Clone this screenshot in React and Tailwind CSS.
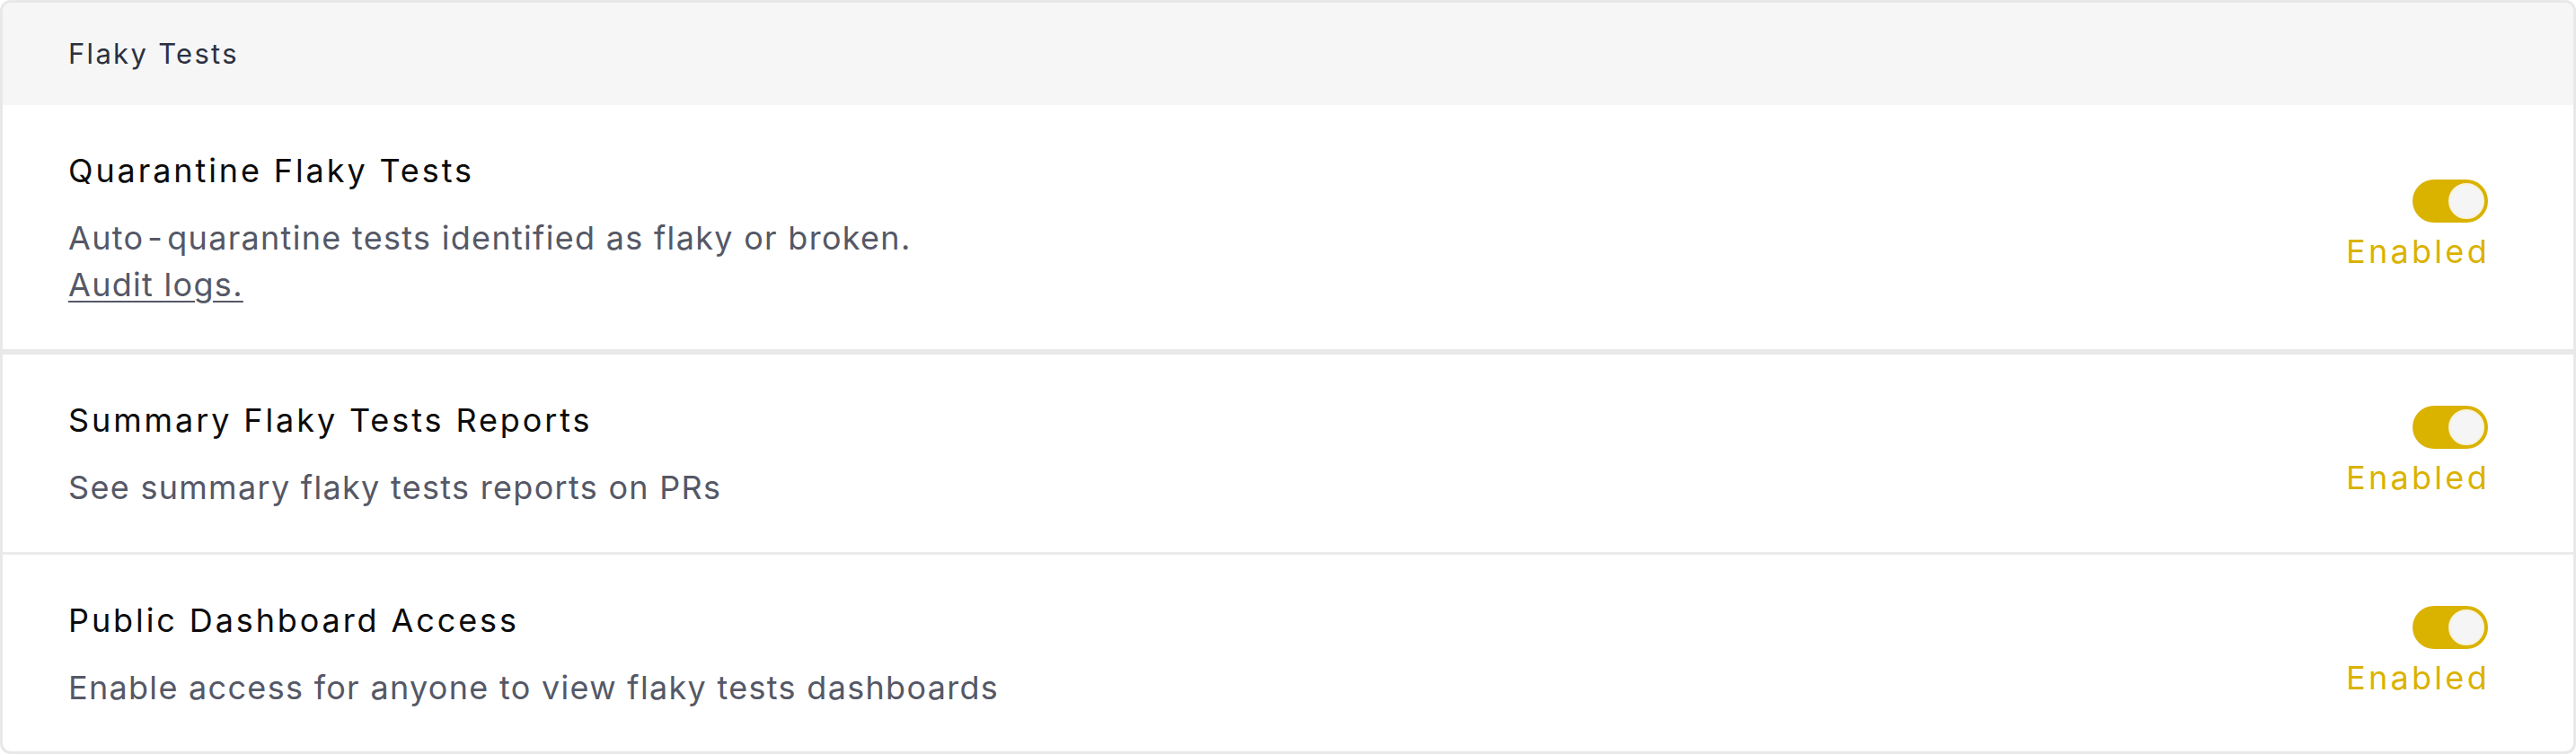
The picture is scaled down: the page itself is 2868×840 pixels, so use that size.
import React from 'react';

const settings = [
    {
        title: 'Quarantine Flaky Tests',
        description: (
            <>
                Auto<span className="mx-[4px]">-</span>quarantine tests identified as flaky or broken.
                <br />
                <a href="#" className="underline underline-offset-[5px] decoration-[2px]">Audit logs.</a>
            </>
        ),
        enabled: true,
        thick: true,
    },
    {
        title: 'Summary Flaky Tests Reports',
        description: 'See summary flaky tests reports on PRs',
        enabled: true,
    },
    {
        title: 'Public Dashboard Access',
        description: 'Enable access for anyone to view flaky tests dashboards',
        enabled: true,
    },
];

const Toggle = ({ on }) => (
    <div className={`w-[84px] h-[48px] rounded-full p-[4px] flex ${on ? 'bg-[#dab200] justify-end' : 'bg-[#d4d4d8] justify-start'}`}>
        <div className="w-[40px] h-[40px] rounded-full bg-[#f5f5f5] border-[2px] border-[#f8f3dc]" />
    </div>
);

const SettingRow = ({ item, last }) => (
    <div
        className={`flex items-center justify-between pl-[73px] pr-[95px] py-[46px] ${
            last ? '' : item.thick ? 'border-b-[6px] border-[#e8e9eb]' : 'border-b-[3px] border-[#ebebeb]'
        }`}
    >
        <div className="flex flex-col gap-[22px]">
            <h3 className="text-[36px] leading-[54px] tracking-[2.9px] text-[#0b0b0b] font-normal">{item.title}</h3>
            <p className="text-[36px] leading-[52px] tracking-[1.3px] text-[#555866]">{item.description}</p>
        </div>
        <div className="flex flex-col items-end">
            <Toggle on={item.enabled} />
            <span className="text-[36px] leading-[54px] tracking-[3.3px] text-[#dab200] mt-[5px] -mr-[2px]">
                {item.enabled ? 'Enabled' : 'Disabled'}
            </span>
        </div>
    </div>
);

export default function App() {
    return (
        <div className="w-[2868px] h-[840px] bg-white" style={{ fontFamily: 'Inter, "Noto Sans", sans-serif' }}>
            <div className="h-full border-[3px] border-[#e8e8e8] rounded-[12px] overflow-hidden bg-white">
                {/* Header */}
                <div className="h-[114px] bg-[#f6f6f6] flex items-center pl-[73px]">
                    <h2 className="text-[31px] tracking-[2.3px] text-[#2c3040]">Flaky Tests</h2>
                </div>

                {settings.map((item, i) => (
                    <SettingRow key={item.title} item={item} last={i === settings.length - 1} />
                ))}
            </div>
        </div>
    );
}
